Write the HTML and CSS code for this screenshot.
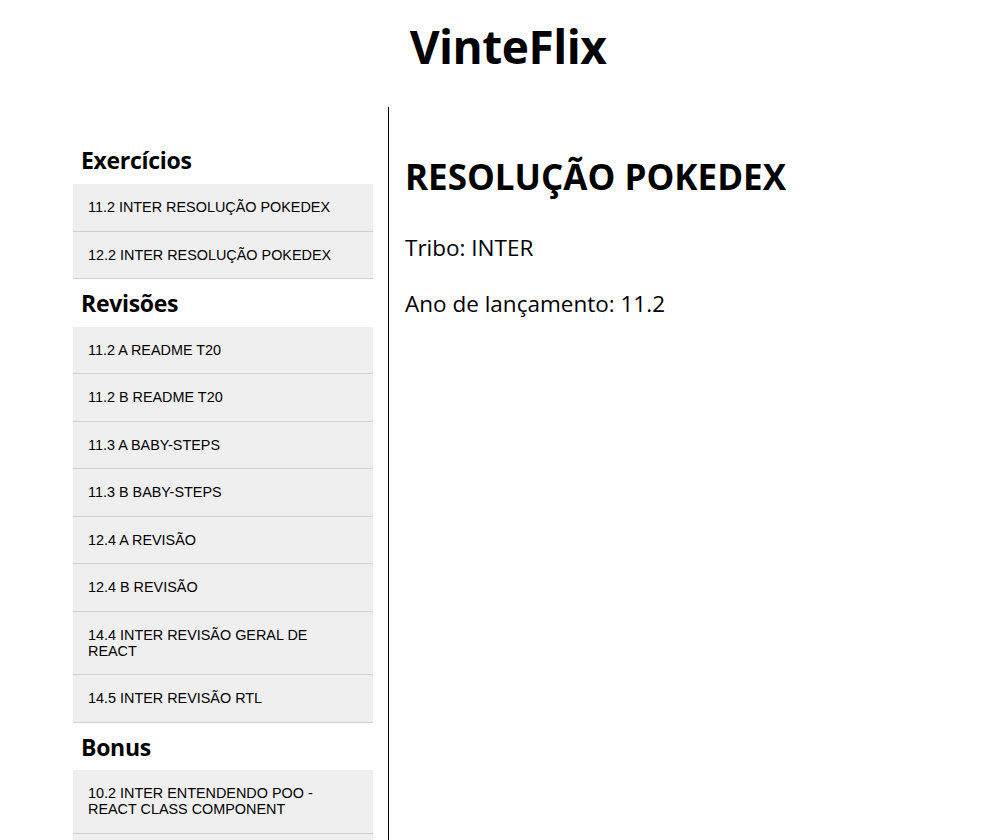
FILE: index.html
```html
<!DOCTYPE html>
<html lang="pt-BR">
<head>
<meta charset="utf-8">
<title>VinteFlix</title>
<link rel="stylesheet" href="styles.css">
</head>
<body>
<header class="top">
  <h1 class="brand">VinteFlix</h1>
</header>
<div class="layout">
  <nav class="sidebar">
    <section class="group">
      <h2 class="group-title">Exercícios</h2>
      <button class="item">11.2 INTER RESOLUÇÃO POKEDEX</button>
      <button class="item">12.2 INTER RESOLUÇÃO POKEDEX</button>
    </section>
    <section class="group">
      <h2 class="group-title">Revisões</h2>
      <button class="item">11.2 A README T20</button>
      <button class="item">11.2 B README T20</button>
      <button class="item">11.3 A BABY-STEPS</button>
      <button class="item">11.3 B BABY-STEPS</button>
      <button class="item">12.4 A REVISÃO</button>
      <button class="item">12.4 B REVISÃO</button>
      <button class="item">14.4 INTER REVISÃO GERAL DE REACT</button>
      <button class="item">14.5 INTER REVISÃO RTL</button>
    </section>
    <section class="group">
      <h2 class="group-title">Bonus</h2>
      <button class="item">10.2 INTER ENTENDENDO POO - REACT CLASS COMPONENT</button>
      <button class="item">10.3 INTER ENTENDENDO POO</button>
    </section>
  </nav>
  <main class="content">
    <h1 class="title">RESOLUÇÃO POKEDEX</h1>
    <p class="info">Tribo: INTER</p>
    <p class="info">Ano de lançamento: 11.2</p>
  </main>
</div>
</body>
</html>
```
FILE: styles.css
```css
html, body {
  margin: 0;
  padding: 0;
  background: #fff;
  color: #000;
  font-family: "Open Sans", "Noto Sans", sans-serif;
}

.top {
  display: flex;
  justify-content: center;
  padding-left: 24px;
  height: 107px;
}

.brand {
  margin: 0;
  padding-top: 14px;
  font-size: 46px;
  font-weight: 700;
  line-height: 64px;
  letter-spacing: -0.5px;
}

.layout {
  display: flex;
  padding-left: 73px;
}

.sidebar {
  width: 300px;
  flex: none;
  padding-top: 38px;
  margin-right: 15px;
}

.group-title {
  margin: 0;
  padding: 9px 8px 0;
  height: 47.5px;
  box-sizing: border-box;
  font-size: 23px;
  font-weight: 700;
  line-height: 30px;
  letter-spacing: -0.3px;
}

.group:first-child .group-title {
  padding-top: 0;
  height: 39px;
}

.item {
  display: block;
  width: 100%;
  margin: 0;
  padding: 15.25px 30px 15.25px 15px;
  border: none;
  border-bottom: 1px solid #d0d0d0;
  background: #efefef;
  color: #000;
  text-align: left;
  font-family: "Liberation Sans", Arial, sans-serif;
  font-size: 14.4px;
  line-height: 16px;
}

.content {
  flex: 1;
  border-left: 1px solid #000;
  padding-left: 16px;
  padding-top: 47px;
  min-height: 733px;
}

.title {
  margin: 0 0 32px;
  font-size: 35px;
  font-weight: 700;
  line-height: 46px;
}

.info {
  margin: 0 0 24px;
  font-size: 22.5px;
  line-height: 32px;
}
```
